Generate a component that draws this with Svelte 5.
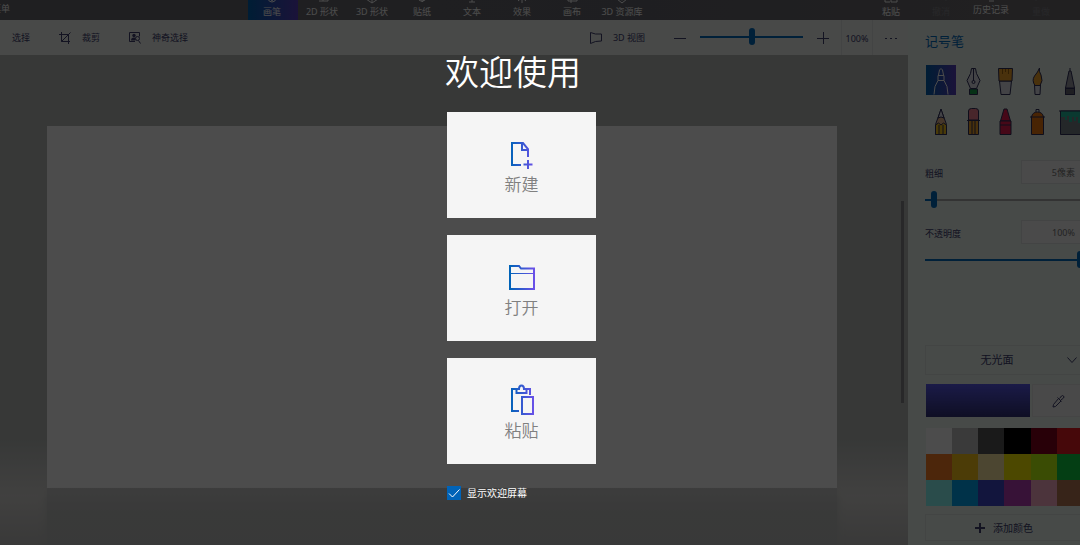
<script>
  const tabs = [
    { label: '画笔', icon: 'M7 1h4v9l-2 5-2-5zM5 10v3q1 3 4 3t4-3' },
    { label: '2D 形状', icon: 'M3 10h7v5h5v-4l-3-5M10 15h-4' },
    { label: '3D 形状', icon: 'M9 1l6 4v8l-6 4-6-4V5zM9 9v8M9 9l6-4M9 9L3 5' },
    { label: '贴纸', icon: 'M4 9a5 5 0 1 0 10 2L9 16M14 7v4H9v5' },
    { label: '文本', icon: 'M3 3h12M9 3v13M6 16h6' },
    { label: '效果', icon: 'M9 6v11M4 12h10M5 15l8-7M13 15L5 8' },
    { label: '画布', icon: 'M5 4h9v11H5zM2 12h14M8 2v15' },
    { label: '3D 资源库', icon: 'M4 9l5-4 5 4v4l-5 4-5-4zM4 11l5 3 5-3' }
  ];
  const history = [
    { label: '粘贴', icon: 'M3 3h9v6M3 3v13h5M9 9h6v7H9z' },
    { label: '撤消', icon: 'M4 8h6q4 1 4 7M4 8l3-3M4 8l3 3', off: true },
    { label: '历史记录', icon: 'M3 9a6 6 0 1 1 6 6M9 5v5h4M7 17h5' },
    { label: '重做', icon: 'M14 8H8q-4 1-4 7M14 8l-3-3M14 8l-3 3', off: true }
  ];
  const swatches = [
    '#ffffff', '#c3c3c3', '#585858', '#000000', '#88001b', '#ec1c24',
    '#ff7f27', '#ffca18', '#fdeca6', '#fff200', '#c4ff0e', '#0ed145',
    '#8cfffb', '#00a8f3', '#3f48cc', '#b83dba', '#ffaec8', '#b97a56'
  ];
  const pens = ['记号笔', '钢笔', '油画笔', '水彩笔', '像素笔', '铅笔', '橡皮擦', '蜡笔', '喷雾罐', '填充'];
  let zoom = $state(50);
  let size = $state(4);
  let opacity = $state(100);
  let showWelcome = $state(true);
</script>

<div class="app">
  <header class="topbar">
    <button class="menu">菜单</button>
    <nav class="tabs">
      {#each tabs as tab, i}
        <button class="tab" class:active={i === 0}>
          <svg viewBox="0 0 18 18"><path d={tab.icon} /></svg>
          <span>{tab.label}</span>
        </button>
      {/each}
    </nav>
    <div class="history">
      {#each history as item}
        <button class="tab" class:off={item.off} class:raised={item.label.length > 2}>
          <svg viewBox="0 0 18 18"><path d={item.icon} /></svg>
          <span>{item.label}</span>
        </button>
      {/each}
    </div>
  </header>

  <div class="body">
    <main class="main">
      <div class="toolbar">
        <button class="tool">选择</button>
        <button class="tool">
          <svg viewBox="0 0 12 12"><path d="M2.500 0v9.500H11M0 2.500h9.500V12M2.500 9.500L11.500.5" /></svg>
          裁剪
        </button>
        <button class="tool">
          <svg viewBox="0 0 12 12"><path d="M6 9.500H.5v-9h10v4" /><circle class="solid" cx="5" cy="3.500" r="1.700" /><path class="solid" d="M2 8.500q0-3 3-3 1.500 0 1.500 1v2z" /><circle cx="8.500" cy="6.500" r="2" /><path d="M9.500 8.500l2 3" /></svg>
          神奇选择
        </button>
        <div class="view">
          <button class="tool">
            <svg viewBox="0 0 12 12"><path d="M.5.500l5 1.500h6v7l-6 .5-5 2z" /></svg>
            3D 视图
          </button>
          <button class="step" aria-label="缩小"><svg viewBox="0 0 12 12"><path d="M0 6.500h12" /></svg></button>
          <input class="zoom" type="range" aria-label="缩放" bind:value={zoom} />
          <button class="step" aria-label="放大"><svg viewBox="0 0 12 12"><path d="M0 6.500h12M6.500 0v12" /></svg></button>
          <span class="percent">100%</span>
          <button class="more" aria-label="更多"><svg viewBox="0 0 12 12"><path d="M0 6.500h2M5 6.500h2M10 6.500h2" /></svg></button>
        </div>
      </div>
      <div class="stage">
        <div class="canvas"></div>
        <div class="reflection"></div>
        <div class="thumb"></div>
      </div>
    </main>

    <aside class="panel">
      <div class="inner">
        <h2>记号笔</h2>
        <div class="pens">
          {#each pens as pen, i}
            <button class="pen" class:chosen={i === 0} aria-label={pen}>
              <svg viewBox="0 0 30 30">
                {#if i === 0}
                  <g class="white"><path d="M8 29.500q0-9 4-14h6q4 5 4 14M12 15.500v-5h6v5zM12.500 10l1-5 1.500-1.500L16.500 5l1 5" /></g>
                {:else if i === 1}
                  <path fill="#e0e0ea" d="M13.500 3.500h4l1 5 3.500 7-3.500 8h-6L9 15.500l3.500-7z" /><path d="M15.500 4v12" /><circle cx="15.500" cy="17" r="1.500" /><path fill="#16a34c" d="M11.500 24h8v5.500h-8z" />
                {:else if i === 2}
                  <path fill="#e0e0ea" d="M9.500 16h12l-1.500 13.500h-9z" /><path fill="#f4a52a" d="M8.500 3.500h14l-.5 12.500H9z" /><path stroke="#a56a10" d="M12.500 4v5M15.500 4v3M18.500 4v5" />
                {:else if i === 3}
                  <path fill="#e0e0ea" d="M12.500 20h6l-.5 9.500h-5z" /><path fill="#f4a52a" d="M17.500 3q-1 3 1.500 7 2.500 6-1 10.500h-5q-3.500-5-.5-9.500Q16 7 17.500 3z" />
                {:else if i === 4}
                  <path fill="#9a9aa6" d="M15 6h2l3.500 17v6.500h-9V23z" /><path d="M11 23h10M16 3v3" /><path fill="#666674" d="M11.500 23.500h9v6h-9z" />
                {:else if i === 5}
                  <path fill="#eab98e" d="M15 4.500l5.500 15v10h-11v-10z" /><path fill="#e0e0ea" d="M15 4l3 9-3-1-3 1z" /><path fill="#f5c21c" d="M9.500 20l3-2 2.500 2 2.500-2 3 2v9.500h-11zM13 20v9M17 20v9" />
                {:else if i === 6}
                  <path fill="#f4a52a" d="M10.500 15h10v14.500h-10zM14 15v14M17 15v14" /><path fill="#f08090" d="M10.500 15V6q0-2.500 3-2.500h4q3 0 3 2.500v9z" /><path d="M9 15.500h13" />
                {:else if i === 7}
                  <path fill="#ec1c50" d="M10.500 16L14 4h3l3.500 12z" /><path fill="#ec1c50" d="M10 16h11v13.500H10zM10 20h11" />
                {:else if i === 8}
                  <path fill="#f07a10" d="M9.500 12q1-5 6-5t6 5v17.500h-12z" /><path d="M8 12h15M14 7V4.500h3V7" />
                {:else}
                  <path fill="#78828a" d="M6.500 6h20v23.500h-20z" /><path fill="#22bfa0" stroke="none" d="M7 6h19v12h-2v-6h-2v4h-2v-4h-2v5h-3v-6h-2v4h-2v-3H7z" /><path d="M5 6h23" />
                {/if}
              </svg>
            </button>
          {/each}
        </div>

        <div class="field">
          <label for="size">粗细</label>
          <input type="text" aria-label="粗细值" value="5像素" />
        </div>
        <input id="size" class="size" type="range" bind:value={size} />
        <div class="field">
          <label for="opacity">不透明度</label>
          <input type="text" aria-label="不透明度值" value="100%" />
        </div>
        <input id="opacity" class="opacity" type="range" bind:value={opacity} />

        <div class="material">
          <select aria-label="材质"><option>无光面</option></select>
          <svg viewBox="0 0 10 10"><path d="M.5 2.500l4.500 5 4.500-5" /></svg>
        </div>
        <div class="current">
          <button class="color" aria-label="当前颜色"></button>
          <button class="dropper" aria-label="取色器">
            <svg viewBox="0 0 14 14"><path d="M7.500 4.500l2.500 2.500-5.500 5.500-2.500.5.500-2.500z" /><path d="M6.500 3.500l4 4M8.500 4.500l2-2.500q1-1 2 0t0 2l-2.500 2" /></svg>
          </button>
        </div>
        <div class="palette">
          {#each swatches as color}
            <button aria-label={color} style="background: {color}"></button>
          {/each}
        </div>
        <button class="add">
          <svg viewBox="0 0 10 10"><path d="M0 5h10M5 0v10" /></svg>
          添加颜色
        </button>
      </div>
    </aside>
  </div>

  <div class="overlay">
    <section class="welcome">
      <h1>欢迎使用</h1>
      <button class="card">
        <svg viewBox="0 0 30 32">
          <defs>
            <linearGradient id="ink" gradientUnits="userSpaceOnUse" x1="3" y1="0" x2="27" y2="0">
              <stop offset="0" stop-color="#0063b8" /><stop offset="1" stop-color="#6a50e8" />
            </linearGradient>
          </defs>
          <path d="M14 27H5V5h11l5 6v8M15 5v7h6M21 22v9M16.500 26.500h9" />
        </svg>
        <span>新建</span>
      </button>
      <button class="card">
        <svg viewBox="0 0 30 32"><path d="M3 5h9l2 2.500h13V28H3z" /><path class="thin" d="M3 12.500h24" /></svg>
        <span>打开</span>
      </button>
      <button class="card">
        <svg viewBox="0 0 30 32"><path d="M12 27H5V5h4M19 5h4v6M15 13h11v17H15z" /><path class="clip" d="M9.500 9V5H12q0-3.500 2.500-3.500T17 5h2.500v4z" /></svg>
        <span>粘贴</span>
      </button>
      <label class="show">
        <span class="box">
          <input type="checkbox" bind:checked={showWelcome} />
          {#if showWelcome}<svg viewBox="0 0 14 14"><path d="M2 7.500L5.500 11 12.500 3.500" /></svg>{/if}
        </span>
        显示欢迎屏幕
      </label>
    </section>
  </div>
</div>

<style>
  :global(body) { margin: 0; }
  .app {
    position: relative;
    height: 100vh;
    display: flex;
    flex-direction: column;
    overflow: hidden;
    background: #b9bebb;
    color: #40406e;
    font: 9px/12px "Noto Sans", "Noto Sans CJK SC", sans-serif;
  }
  * { box-sizing: border-box; }
  button, input, select { font: inherit; color: inherit; border: 0; padding: 0; margin: 0; background: none; border-radius: 0; }
  svg { fill: none; stroke: currentColor; flex: none; display: block; }
  .solid { fill: currentColor; stroke: none; }
  h1, h2 { margin: 0; font-weight: 400; }

  .topbar {
    height: 20px;
    flex: none;
    display: flex;
    align-items: flex-end;
    overflow: hidden;
    background: linear-gradient(90deg, #6a6a70, #67676e 60%, #706c70);
    color: #fff;
  }
  .menu { width: 18px; margin-left: -8px; padding-bottom: 5px; white-space: nowrap; }
  .tabs { display: flex; flex: 1; padding-left: 238px; }
  .history { display: flex; width: 213px; }
  .tab {
    width: 50px;
    height: 38px;
    display: flex;
    flex-direction: column;
    align-items: center;
    justify-content: flex-end;
    padding: 0 2px 2px 0;
    gap: 2px;
    white-space: nowrap;
  }
  .tab svg { width: 18px; height: 18px; }
  .raised { padding-bottom: 4px; }
  .off { color: #85858a; }
  .active { background: linear-gradient(90deg, #0063b1, #5a3fc0); }

  .body { flex: 1; display: flex; min-height: 0; }
  .main { flex: 1; min-width: 0; display: flex; flex-direction: column; }
  .toolbar {
    height: 35px;
    flex: none;
    display: flex;
    align-items: center;
    gap: 29px;
    padding-left: 12px;
    background: #f1f4f2;
  }
  .tool { display: flex; align-items: center; gap: 11px; white-space: nowrap; }
  .toolbar svg { width: 12px; height: 12px; }
  .view { margin-left: auto; display: flex; align-items: center; height: 100%; }
  .step { margin-left: 14px; }
  .view .tool + .step { margin-left: 29px; }
  .percent { margin-left: 12px; width: 32px; height: 100%; line-height: 37px; text-align: center; border: solid #e2e5e3; border-width: 0 1px; }
  .more { width: 35px; display: flex; justify-content: center; }

  input[type='range'] { appearance: none; height: 17px; --line: linear-gradient(#006cc0, #006cc0); background: var(--line) center / 100% 2px no-repeat; }
  input[type='range']::-webkit-slider-thumb { appearance: none; width: 6px; height: 17px; border-radius: 3px; background: #006cc0; }
  .zoom { width: 103px; margin-left: 14px; }
  .toolbar .zoom { margin-bottom: 2px; }

  .stage {
    position: relative;
    flex: 1;
    padding: 71px 71px 0 47px;
    display: flex;
    flex-direction: column;
    background: linear-gradient(#b7bdba 0, #b7bcb9 78%, #d2d2d0 87%, #d9d8d5 90%, #c0c0bf 100%);
  }
  .canvas { flex: 1; background: #fff; }
  .reflection { height: 57px; background: linear-gradient(#cbcbcb, #c0c1c0 40%, #bdc0be); box-shadow: 0 6px 8px #bdc0be; }
  .thumb { position: absolute; top: 146px; bottom: 142px; right: 4px; width: 3px; background: #85888a; }

  .panel { width: 172px; flex: none; overflow: hidden; padding: 12px 0 0 17px; background: #edf7f2; }
  .inner { width: 158px; }
  h2 { font-size: 13px; line-height: 18px; color: #006cc0; }
  .pens { display: grid; grid-template-columns: repeat(5, 30px); gap: 10px 2px; padding: 15px 0 0 1px; }
  .pen { height: 30px; color: #30305a; }
  .pen svg { width: 30px; height: 30px; }
  .chosen { background: linear-gradient(90deg, #0063b1, #5a3fc0); }
  .white { stroke: #fff; }
  .field { display: flex; align-items: center; justify-content: space-between; margin-top: 25px; }
  .field label { padding-top: 4px; }
  .field input { width: 62px; height: 24px; padding-right: 7px; text-align: right; background: #f8f8f8; border: 1px solid #e2e5e5; color: #777; }
  .inner input[type='range'] { display: block; width: 158px; margin-top: 7px; }
  .inner .size { background: var(--line) left / 10px 2px no-repeat, linear-gradient(#aaa, #aaa) center / 100% 2px no-repeat; }
  .size + .field { margin-top: 12px; }
  .material { display: grid; align-items: center; margin-top: 77px; height: 30px; border: 1px solid #e0e6e3; }
  .material > * { grid-area: 1 / 1; }
  .material select { appearance: none; height: 28px; padding-right: 14px; font-size: 11px; text-align: center; text-align-last: center; }
  .material svg { width: 10px; height: 10px; justify-self: end; margin-right: 5px; pointer-events: none; }
  .current { display: flex; gap: 2px; margin-top: 9px; padding-left: 1px; }
  .color { width: 104px; height: 33px; background: linear-gradient(#5a5af0, #323278); }
  .dropper { flex: 1; height: 33px; display: flex; align-items: center; justify-content: center; background: #f4f4f4; border: 1px solid #e6e8e8; }
  .dropper svg { width: 14px; height: 14px; }
  .palette { display: grid; grid-template-columns: repeat(6, 1fr); grid-auto-rows: 26px; margin: 11px 0 0 1px; }
  .add { display: flex; align-items: center; gap: 8px; width: 158px; height: 27px; margin-top: 8px; padding-left: 49px; border: 1px solid #e0e6e3; font-size: 10px; }
  .add svg { width: 10px; height: 10px; stroke-width: 2; }

  .overlay {
    position: absolute;
    inset: 0;
    display: flex;
    justify-content: center;
    padding-right: 37px;
    background: rgba(0, 0, 0, 0.7);
  }
  .welcome { width: 149px; padding-top: 49px; display: flex; flex-direction: column; gap: 17px; }
  h1 { font-size: 34px; line-height: 46px; color: #fff; font-weight: 350; margin-left: -2px; white-space: nowrap; }
  .card {
    height: 106px;
    flex: none;
    display: flex;
    flex-direction: column;
    align-items: center;
    justify-content: center;
    gap: 3px;
    padding-top: 4px;
    background: #f5f5f5;
    color: #808080;
    font-size: 17px;
    line-height: 24px;
    font-weight: 350;
  }
  .card svg { width: 30px; height: 32px; stroke: url(#ink); stroke-width: 2; }
  .card .thin { stroke-width: 1; }
  .card .clip { stroke-width: 2; }
  .show { display: flex; align-items: center; gap: 6px; margin-top: 4px; color: #fff; font-size: 10px; line-height: 16px; white-space: nowrap; }
  .box { display: grid; width: 14px; height: 14px; }
  .box > * { grid-area: 1 / 1; }
  .box input { appearance: none; background: #0063b8; }
  .box svg { pointer-events: none; }
</style>
